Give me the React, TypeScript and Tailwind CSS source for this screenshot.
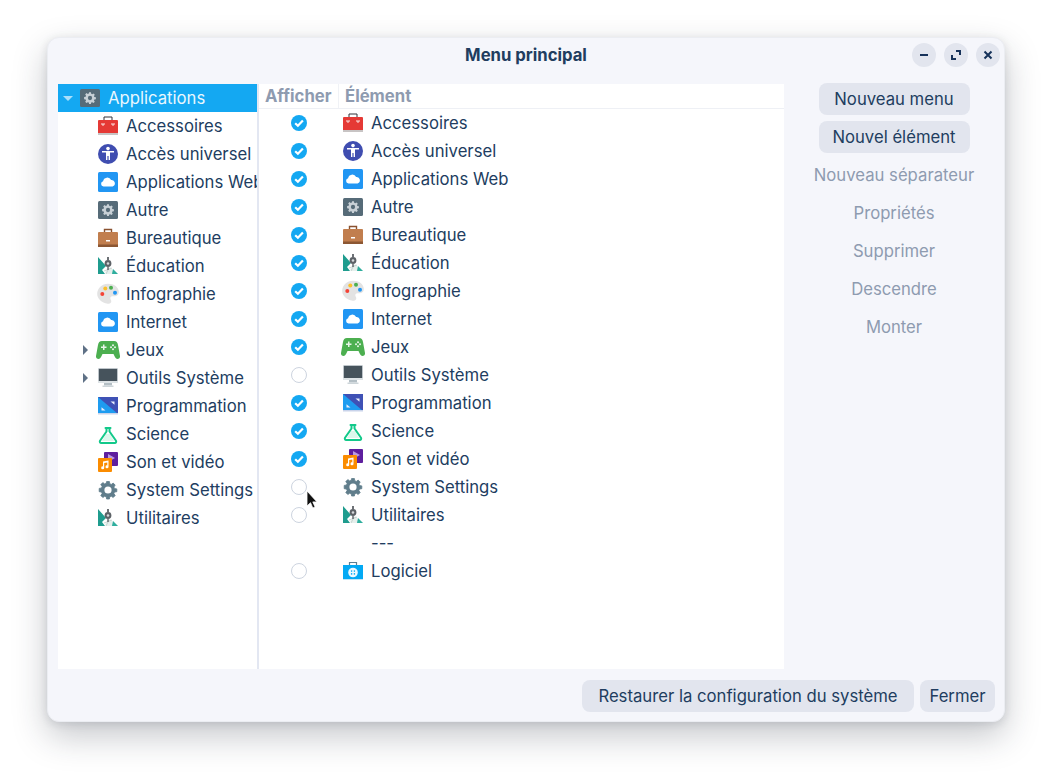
import React from "react";

type IconName =
  | "gear" | "toolbox" | "access" | "cloud" | "briefcase" | "edu" | "palette"
  | "games" | "monitor" | "code" | "flask" | "media" | "settings" | "store";

const GEAR =
  "M8.6 1.500h2.800l.4 2.300 1.500.6 1.900-1.300 2 2-1.300 1.900.6 1.500 2.300.4v2.800l-2.300.4-.6 1.500 1.300 1.900-2 2-1.900-1.300-1.500.6-.4 2.200H8.600l-.4-2.200-1.500-.6-1.900 1.300-2-2 1.300-1.900-.6-1.500-2.300-.4V8.400l2.300-.4.6-1.500-1.300-1.900 2-2 1.900 1.300 1.500-.6z";

function Icon({ name }: { name: IconName }) {
  const common = { width: 20, height: 20, viewBox: "0 0 20 20", className: "shrink-0" };
  switch (name) {
    case "gear":
      return (
        <svg {...common}>
          <rect x="0" y="1" width="20" height="18" rx="1.500" fill="#566b78" />
          <g transform="translate(3.300 3.300) scale(.67)">
            <path d={GEAR} fill="#c8d0d6" />
            <circle cx="10" cy="10" r="3.200" fill="#566b78" />
          </g>
        </svg>
      );
    case "toolbox":
      return (
        <svg {...common}>
          <path d="M6 4V1h8v3" fill="none" stroke="#33333a" strokeWidth="1" />
          <path d="M1 4h18a1 1 0 0 1 1 1v13H0V5a1 1 0 0 1 1-1z" fill="#e53935" />
          <rect x="0" y="17" width="20" height="2" fill="#c8c4c4" />
          <path d="M4 7v2h2V7M14 7v2h2V7" fill="none" stroke="#fbe4e2" strokeWidth="1" />
        </svg>
      );
    case "access":
      return (
        <svg {...common}>
          <circle cx="10" cy="10" r="10" fill="#3f4db0" />
          <circle cx="10" cy="4.600" r="1.800" fill="#fff" />
          <path d="M4 7h12v1.500h-4v7.500h-1.400v-4H9.400v4H8V8.500H4z" fill="#fff" />
        </svg>
      );
    case "cloud":
      return (
        <svg {...common}>
          <rect x="0" y="0" width="20" height="20" rx="1.500" fill="#2196f3" />
          <path d="M5.500 14.500a2.700 2.700 0 0 1-.4-5.300 4.200 4.200 0 0 1 8-1.100 3.300 3.300 0 0 1 1.500 6.400z" fill="#fff" />
        </svg>
      );
    case "briefcase":
      return (
        <svg {...common}>
          <path d="M6.500 4V1.500h7V4" fill="none" stroke="#8a5230" strokeWidth="1.400" />
          <path d="M1 4h18a1 1 0 0 1 1 1v14H0V5a1 1 0 0 1 1-1z" fill="#c17e4e" />
          <rect x="0" y="16.500" width="20" height="2.500" fill="#8c5733" />
          <rect x="8" y="12" width="4" height="1.500" fill="#fff" />
        </svg>
      );
    case "edu":
      return (
        <svg {...common}>
          <path d="M0 1l8 9-4 4 3 4H0z" fill="#1f9c8e" />
          <path d="M7 16l5-5 8 7H8z" fill="#e6efec" />
          <path d="M15 13l5 5h-6z" fill="#2fae9e" />
          <path d="M6 15l8-3M8 18l3-6" stroke="#b9c9c4" strokeWidth=".7" />
          <rect x="9.200" y="1" width="1.600" height="3" fill="#4a4f55" />
          <circle cx="10" cy="7.500" r="3.400" fill="#5c6166" />
          <circle cx="10" cy="7.500" r="1.300" fill="#d5d8db" />
          <path d="M9.300 11h1.400v3H9.300z" fill="#5c6166" />
        </svg>
      );
    case "palette":
      return (
        <svg width="22" height="22" viewBox="0 0 22 22" className="shrink-0 -mx-px">
          <path d="M11 .7c6 0 10.800 3.500 10.800 8.300 0 3.500-2.800 4.500-5 4.300-2-.2-3.500.3-3.500 2 0 1.200 1 1.700 1 3 0 1.700-1.600 2.900-3.500 2.400C4.500 19.700.2 15.500.2 11 .2 5.500 5 .7 11 .7z" fill="#e3e3e3" />
          <circle cx="5.300" cy="11" r="2" fill="#f44336" />
          <circle cx="8.300" cy="5.600" r="2" fill="#fbc02d" />
          <circle cx="14" cy="4.800" r="2" fill="#4caf50" />
          <circle cx="18" cy="9.800" r="2" fill="#2196f3" />
        </svg>
      );
    case "games":
      return (
        <svg width="24" height="20" viewBox="0 0 24 20" className="shrink-0 -mx-0.5">
          <path d="M6 1h12c2.500 0 3.500 1.500 4 4l2 11c.3 2-1 3-2.500 3-1.300 0-2-1-2.800-2.500L17.500 14h-11l-1.200 2.500C4.500 18 3.800 19 2.500 19 1 19-.3 18 0 16L2 5c.5-2.500 1.500-4 4-4z" fill="#4caf50" />
          <path d="M5 6.500h2v-2h1.500v2h2V8h-2v2H7V8H5z" fill="#e8f5e9" />
          <circle cx="15" cy="7.300" r="1" fill="#e8f5e9" />
          <circle cx="19" cy="7.300" r="1" fill="#e8f5e9" />
          <circle cx="17" cy="5.300" r="1" fill="#e8f5e9" />
          <circle cx="17" cy="9.300" r="1" fill="#e8f5e9" />
        </svg>
      );
    case "monitor":
      return (
        <svg {...common}>
          <rect x="0" y="0" width="20" height="15" fill="#dde3e6" />
          <rect x=".8" y=".8" width="18.400" height="12.200" fill="#46535c" />
          <rect x="6" y="15" width="8" height="2.500" fill="#b4bfc5" />
          <rect x="4.500" y="17.500" width="11" height="1.500" fill="#cdd5d9" />
        </svg>
      );
    case "code":
      return (
        <svg {...common}>
          <rect x="0" y="1" width="20" height="17" fill="#3f51b5" />
          <path d="M0 1l20 17H0z" fill="#1e9cf0" />
          <rect x="0" y="17" width="20" height="1.500" fill="#c9d3ea" />
          <path d="M3.500 14.500h4l-4-3.200zM12.500 5.500h4v3.200z" fill="#e8eefc" />
        </svg>
      );
    case "flask":
      return (
        <svg {...common}>
          <path d="M8 10l-4 7h12l-4-7z" fill="#dcf7ec" />
          <path d="M7.500 4h5M8.500 4v3.500L2 16.800c-.5.900 0 2.200 1.200 2.200h13.600c1.200 0 1.700-1.300 1.200-2.200L11.500 7.500V4" fill="none" stroke="#12c98a" strokeWidth="2" strokeLinejoin="round" strokeLinecap="round" />
        </svg>
      );
    case "media":
      return (
        <svg {...common}>
          <rect x="6" y="0" width="14" height="14" rx="1" fill="#5e1f9e" />
          <path d="M10 2l7 4-7 4z" fill="#b99ae0" />
          <rect x="0" y="6" width="14" height="14" rx="1" fill="#fb8c00" />
          <path d="M5 9.500l5.500-1v6.300a1.500 1.500 0 1 1-1.200-1.400V10.500L6.200 11v4.800A1.500 1.500 0 1 1 5 14.400z" fill="#fff" />
        </svg>
      );
    case "settings":
      return (
        <svg {...common}>
          <path d={GEAR} fill="#607d8b" stroke="#607d8b" strokeWidth=".8" strokeLinejoin="round" />
          <circle cx="10" cy="10" r="3.600" fill="#fff" />
        </svg>
      );
    case "store":
      return (
        <svg {...common}>
          <path d="M6.500 4V1.500h7V4" fill="none" stroke="#5e7f92" strokeWidth="1.200" />
          <rect x="0" y="4" width="20" height="15" fill="#03a9f4" />
          <rect x="0" y="18" width="20" height="1" fill="#bfe6f8" />
          <circle cx="10" cy="11.500" r="4.800" fill="#eef9ff" />
          <circle cx="8.600" cy="10.100" r=".8" fill="#03a9f4" />
          <circle cx="11.400" cy="10.100" r=".8" fill="#03a9f4" />
          <circle cx="8.600" cy="12.900" r=".8" fill="#03a9f4" />
          <circle cx="11.400" cy="12.900" r=".8" fill="#03a9f4" />
        </svg>
      );
  }
}

const items: { label: string; icon: IconName; shown: boolean; sub?: boolean }[] = [
  { label: "Accessoires", icon: "toolbox", shown: true },
  { label: "Accès universel", icon: "access", shown: true },
  { label: "Applications Web", icon: "cloud", shown: true },
  { label: "Autre", icon: "gear", shown: true },
  { label: "Bureautique", icon: "briefcase", shown: true },
  { label: "Éducation", icon: "edu", shown: true },
  { label: "Infographie", icon: "palette", shown: true },
  { label: "Internet", icon: "cloud", shown: true },
  { label: "Jeux", icon: "games", shown: true, sub: true },
  { label: "Outils Système", icon: "monitor", shown: false, sub: true },
  { label: "Programmation", icon: "code", shown: true },
  { label: "Science", icon: "flask", shown: true },
  { label: "Son et vidéo", icon: "media", shown: true },
  { label: "System Settings", icon: "settings", shown: false },
  { label: "Utilitaires", icon: "edu", shown: false },
];

function Check({ on }: { on: boolean }) {
  if (!on) {
    return <span className="block h-4 w-4 rounded-full border border-[#cdd4df] bg-white" />;
  }
  return (
    <svg width="16" height="16" viewBox="0 0 16 16">
      <circle cx="8" cy="8" r="8" fill="#14a8f2" />
      <path d="M4.200 8.200l2.700 2.600 5-5.200" fill="none" stroke="#fff" strokeWidth="2.200" />
    </svg>
  );
}

function WinButton({ children }: { children: React.ReactNode }) {
  return (
    <button className="flex h-6 w-6 items-center justify-center rounded-full bg-[#e2e5ee]">
      <svg width="10" height="10" viewBox="0 0 10 10" fill="none" stroke="#16325a" strokeWidth="2">
        {children}
      </svg>
    </button>
  );
}

function Pill({ children, className = "" }: { children: React.ReactNode; className?: string }) {
  return (
    <button className={`flex h-8 items-center justify-center rounded-lg bg-[#e2e5ee] pt-0.5 text-[#213d5f] ${className}`}>
      {children}
    </button>
  );
}

export default function App() {
  return (
    <div className="h-[779px] w-[1052px] bg-white pl-[47px] pt-[37px] text-[16.7px] text-[#213d5f] [font-family:Inter,'Noto_Sans',sans-serif]">
      <div className="flex h-[685px] w-[958px] flex-col rounded-xl border border-[#ebedf2] bg-[#f5f6fb] shadow-[0_14px_34px_rgba(30,40,55,0.26),0_2px_8px_rgba(30,40,55,0.12)]">
        <div className="relative flex h-[46px] shrink-0 items-center justify-center pb-[10px]">
          <span className="font-bold">Menu principal</span>
          <div className="absolute right-[4px] top-[5px] flex gap-2">
            <WinButton><path d="M1 5h8" /></WinButton>
            <WinButton>
              <path d="M5 1h4v4M5 9H1V5" />
            </WinButton>
            <WinButton><path d="M1.500 1.500l7 7M8.500 1.500l-7 7" /></WinButton>
          </div>
        </div>

        <div className="flex min-h-0 flex-1 pl-[10px]">
          <div className="w-[199px] shrink-0 overflow-hidden bg-white">
            <div className="flex h-7 items-center bg-[#14a8f2] text-[#e9f7fe]">
              <svg width="22" height="10" viewBox="0 0 22 10" className="shrink-0">
                <path d="M5 3h10l-5 5z" fill="#a9dffb" />
              </svg>
              <Icon name="gear" />
              <span className="ml-2 whitespace-nowrap pt-0.5">Applications</span>
            </div>
            {items.map((item) => (
              <div key={item.label} className="flex h-7 items-center">
                <span className="flex w-10 shrink-0 justify-end pr-[8px]">
                  {item.sub && (
                    <svg width="8" height="10" viewBox="0 0 8 10">
                      <path d="M1 0l5 5-5 5z" fill="#5f7186" />
                    </svg>
                  )}
                </span>
                <Icon name={item.icon} />
                <span className="ml-2 whitespace-nowrap pt-0.5">{item.label}</span>
              </div>
            ))}
          </div>

          <div className="w-[2px] shrink-0 bg-[#e3e7f2]" />

          <div className="relative w-[525px] shrink-0 bg-white">
            <div className="flex h-[25px] border-b border-[#eef0f5] font-bold text-[#8e9bb0]">
              <span className="w-20 shrink-0 border-r border-[#f0f2f6] pl-[6px] leading-[24px]">Afficher</span>
              <span className="pl-[6px] leading-[24px]">Élément</span>
            </div>
            {items.map((item) => (
              <div key={item.label} className="flex h-7 items-center">
                <span className="flex w-20 shrink-0 justify-center"><Check on={item.shown} /></span>
                <span className="ml-1 flex w-5 justify-center"><Icon name={item.icon} /></span>
                <span className="ml-2 pt-0.5">{item.label}</span>
              </div>
            ))}
            <div className="flex h-7 items-center pl-[112px] pt-0.5">---</div>
            <div className="flex h-7 items-center">
              <span className="flex w-20 shrink-0 justify-center"><Check on={false} /></span>
              <span className="ml-1 flex w-5 justify-center"><Icon name="store" /></span>
              <span className="ml-2 pt-0.5">Logiciel</span>
            </div>
            <svg width="14" height="20" viewBox="0 0 14 20" className="absolute left-[47px] top-[406px]">
              <path d="M1 1v15l3.500-3.300 2.300 5.300 2.300-1-2.300-5.100H11z" fill="#111" stroke="#fff" strokeWidth=".8" />
            </svg>
          </div>

          <div className="-mt-px flex flex-1 flex-col items-center">
            <Pill className="w-[151px]">Nouveau menu</Pill>
            <Pill className="mt-[6px] w-[151px]">Nouvel élément</Pill>
            {["Nouveau séparateur", "Propriétés", "Supprimer", "Descendre", "Monter"].map((label) => (
              <span key={label} className="mt-[6px] flex h-8 items-center whitespace-nowrap pt-0.5 text-[#8e9bb0]">
                {label}
              </span>
            ))}
          </div>
        </div>

        <div className="flex h-[52px] shrink-0 items-center justify-end gap-[6px] pr-[9px] pt-[2px]">
          <Pill className="w-[332px]">Restaurer la configuration du système</Pill>
          <Pill className="w-[75px]">Fermer</Pill>
        </div>
      </div>
    </div>
  );
}
